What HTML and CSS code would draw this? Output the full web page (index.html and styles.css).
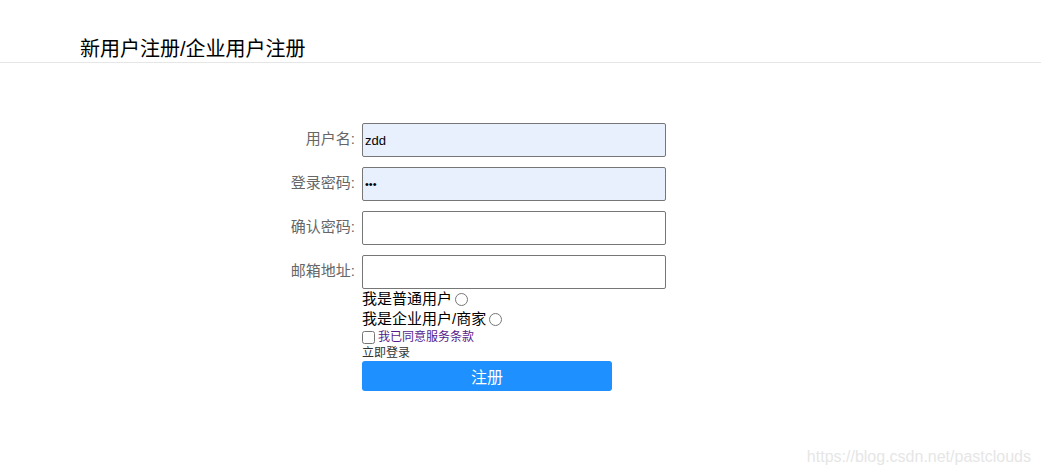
FILE: index.html
```html
<!DOCTYPE html>
<html lang="zh-CN">
<head>
  <meta charset="UTF-8" />
  <meta name="viewport" content="width=device-width, initial-scale=1.0" />
  <title>注册</title>
  <link rel="stylesheet" href="styles.css">
</head>
<body>

  <div class="header">
    <h1>新用户注册/企业用户注册</h1>
  </div>

  <form class="reg-form" onsubmit="return false">
    <label class="label" for="username">用户名:</label>
    <input class="field autofill" type="text" id="username" value="zdd" />

    <label class="label" for="pwd">登录密码:</label>
    <input class="field autofill pass" type="password" id="pwd" value="123" />

    <label class="label" for="pwd2">确认密码:</label>
    <input class="field" type="password" id="pwd2" />

    <label class="label" for="email">邮箱地址:</label>
    <input class="field" type="text" id="email" />

    <div class="extra">
      <label class="radio-line">我是普通用户 <input type="radio" name="type" /></label>
      <label class="radio-line">我是企业用户/商家 <input type="radio" name="type" /></label>
      <label class="agree"><input type="checkbox" /><a href="#">我已同意服务条款</a></label>
      <div class="login-link">立即登录</div>
      <button type="submit" class="submit">注册</button>
    </div>
  </form>

  <div class="watermark">https://blog.csdn.net/pastclouds</div>

</body>
</html>
```

FILE: styles.css
```css
* {
  box-sizing: border-box;
}

body {
  margin: 0;
  font-family: "Liberation Sans", "Noto Sans CJK SC", sans-serif;
  color: #000;
  background: #fff;
  height: 474px;
  position: relative;
}

.header {
  padding: 36px 0 0 80px;
  height: 63px;
  border-bottom: 1px solid #e6e6e6;
}

.header h1 {
  margin: 0;
  font-size: 20px;
  font-weight: normal;
  line-height: 26px;
}

.reg-form {
  display: grid;
  grid-template-columns: 355px 304px;
  column-gap: 7px;
  row-gap: 10px;
  margin-top: 60px;
  align-items: center;
}

.label {
  text-align: right;
  font-size: 15px;
  color: #666;
  margin-top: -5px;
}

.field {
  height: 34px;
  width: 304px;
  margin: 0;
  border: 1px solid #767676;
  border-radius: 2px;
  font-size: 13px;
  font-family: "Liberation Sans", sans-serif;
  padding: 0 2px;
  background: #fff;
}

.field.pass {
  font-size: 11px;
}

.field.autofill {
  background: #e8f0fe;
}

.extra {
  grid-column: 2;
  margin-top: -10px;
  display: flex;
  flex-direction: column;
  align-items: flex-start;
}

.radio-line {
  font-size: 15px;
  line-height: 20px;
  display: flex;
  align-items: center;
}

.radio-line input {
  margin: 0 0 0 3px;
  width: 13px;
  height: 13px;
}

.agree {
  display: flex;
  align-items: center;
  font-size: 12px;
  line-height: 17px;
}

.agree input {
  margin: 0 3px 0 0;
  width: 13px;
  height: 13px;
}

.agree a {
  color: #551a8b;
  text-decoration: none;
}

.login-link {
  font-size: 12px;
  line-height: 14px;
  color: #333;
}

.submit {
  width: 250px;
  height: 30px;
  margin-top: 1px;
  border: none;
  border-radius: 3px;
  background: #1e90ff;
  color: #fff;
  font-size: 16px;
  font-family: "Noto Sans CJK SC", sans-serif;
  cursor: pointer;
}

.watermark {
  position: absolute;
  right: 10px;
  bottom: 8px;
  font-size: 16px;
  color: #e6e6e6;
}
```
